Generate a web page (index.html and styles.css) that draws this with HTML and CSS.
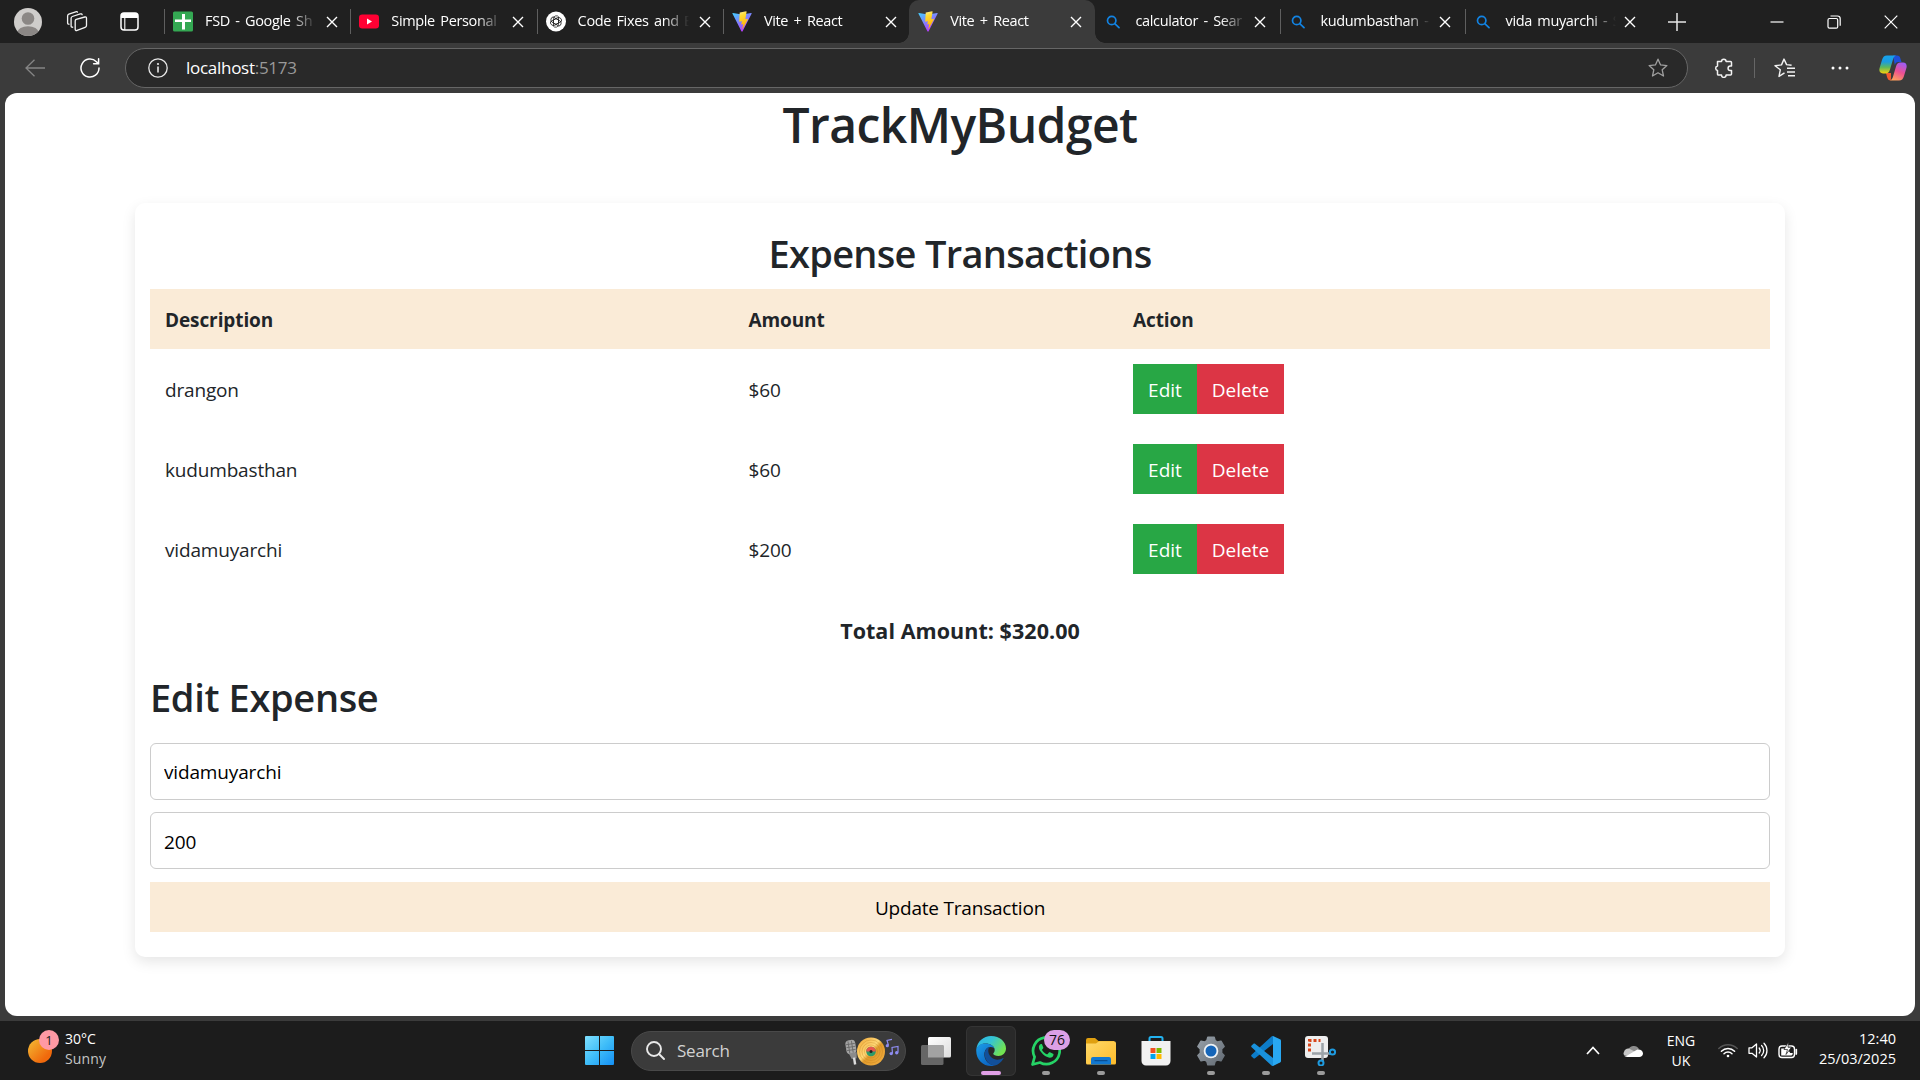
FILE: index.html
```html
<!DOCTYPE html>
<html lang="en">
<head>
<meta charset="utf-8">
<title>TrackMyBudget</title>
<link rel="stylesheet" href="styles.css">
</head>
<body>
<svg class="defs" width="0" height="0" aria-hidden="true">
  <defs>
    <linearGradient id="viteA" x1="0" y1="0" x2=".6" y2="1"><stop offset="0" stop-color="#41d1ff"/><stop offset="1" stop-color="#bd34fe"/></linearGradient>
    <linearGradient id="viteB" x1=".4" y1="0" x2=".6" y2="1"><stop offset="0" stop-color="#ffea83"/><stop offset=".2" stop-color="#ffdd35"/><stop offset="1" stop-color="#ffa800"/></linearGradient>
    <symbol id="vite" viewBox="0 0 20 21"><path d="M.4 2.6 9.4 20.3c.3.5 1 .5 1.200 0L19.700 2.600c.2-.4-.1-.8-.6-.7L10 3.500.900 1.900c-.4-.1-.7.3-.5.700z" fill="url(#viteA)"/><path d="M14.200.3 8 1.500c-.2 0-.3.1-.3.300L7.200 10.300c0 .3.2.4.4.4l1.900-.4c.2 0 .4.1.4.3l-.6 2.500c0 .2.1.4.4.4l1.100-.3c.2-.1.4.1.4.3l-.9 4c0 .3.3.4.4.2L16 8.200c.1-.2 0-.4-.3-.4l-1.900.4c-.3 0-.4-.1-.4-.4l1.200-7.100c0-.2-.1-.4-.4-.4z" fill="url(#viteB)"/></symbol>
    <symbol id="find" viewBox="0 0 14 14"><g fill="none" stroke="#1283e2" stroke-width="1.700" stroke-linecap="round"><circle cx="5.700" cy="5.500" r="4.200"/><path d="M8.800 8.600 13 12.700"/></g></symbol>
    <symbol id="x" viewBox="0 0 12 12"><path d="M1 1l10 10M11 1 1 11" stroke="#fff" stroke-width="1.400"/></symbol>
  </defs>
</svg>

<div class="screen">
  <header class="tabbar">
    <div class="tools">
      <svg class="avatar" viewBox="0 0 28 28"><defs><clipPath id="av"><circle cx="14" cy="14" r="14"/></clipPath></defs><circle cx="14" cy="14" r="14" fill="#cfcdcb"/><g clip-path="url(#av)" fill="#8b8785"><circle cx="14" cy="10.500" r="6.300"/><ellipse cx="14" cy="24.500" rx="10.500" ry="6.300"/></g></svg>
      <svg class="workspaces" viewBox="0 0 22 21" fill="none" stroke="#f2f2f2" stroke-width="1.300" stroke-linejoin="round" stroke-linecap="round"><path d="M10.200 8.400 18.800 6c1-.3 1.700.2 1.700 1.200v7.200c0 .9-.5 1.600-1.400 1.900l-8 3.100c-1.100.4-1.900 0-1.900-1.200V10c0-.8.300-1.300 1-1.600z"/><path d="M6.700 16.200c-1 .2-1.600-.3-1.600-1.200V7.200c0-.8.4-1.400 1.200-1.700l8-2.600c1-.3 1.700 0 1.800.7M3 13.200c-.8.100-1.400-.4-1.400-1.200V5c0-.9.400-1.500 1.200-1.800l6.900-2.400c.9-.3 1.500-.1 1.700.3"/></svg>
      <svg class="vtabs" viewBox="0 0 19 19"><rect x="1" y="1" width="17" height="17" rx="3" fill="none" stroke="#fff" stroke-width="1.500"/><path d="M1 4a3 3 0 0 1 3-3h11a3 3 0 0 1 3 3v2H1z" fill="#fff"/><path d="M4.800 6v12" stroke="#fff" stroke-width="1.100"/></svg>
    </div>
    <nav class="tabs">
      <div class="tab"><svg class="fav" viewBox="0 0 20 20"><rect width="20" height="20" rx="1.500" fill="#34a853"/><path d="M9 2.500h3v5.600h6v2.400h-6V18H9v-7.500H2V8.100h7z" fill="#fff"/></svg><span class="label">FSD - Google Sh</span><svg class="close"><use href="#x"/></svg></div>
      <div class="tab"><svg class="fav" viewBox="0 0 20 20"><rect y="3" width="20" height="14" rx="3.200" fill="#ff0033"/><path d="M8 7v6l5-3z" fill="#fff"/></svg><span class="label">Simple Personal</span><svg class="close"><use href="#x"/></svg></div>
      <div class="tab"><svg class="fav" viewBox="0 0 20 20"><circle cx="10" cy="10" r="10" fill="#fff"/><g fill="none" stroke="#222" stroke-width=".8"><path id="petal" d="M10 12.900 7.400 11.400V7.200a3 3 0 0 1 5.400-1.700M12.500 8.500V5.600"/><use href="#petal" transform="rotate(60 10 10)"/><use href="#petal" transform="rotate(120 10 10)"/><use href="#petal" transform="rotate(180 10 10)"/><use href="#petal" transform="rotate(240 10 10)"/><use href="#petal" transform="rotate(300 10 10)"/></g></svg><span class="label">Code Fixes and E</span><svg class="close"><use href="#x"/></svg></div>
      <div class="tab"><svg class="fav"><use href="#vite"/></svg><span class="label">Vite + React</span><svg class="close"><use href="#x"/></svg></div>
      <div class="tab active"><svg class="fav"><use href="#vite"/></svg><span class="label">Vite + React</span><svg class="close"><use href="#x"/></svg></div>
      <div class="tab slim plain"><svg class="fav small"><use href="#find"/></svg><span class="label">calculator - Sear</span><svg class="close"><use href="#x"/></svg></div>
      <div class="tab slim"><svg class="fav small"><use href="#find"/></svg><span class="label">kudumbasthan -</span><svg class="close"><use href="#x"/></svg></div>
      <div class="tab slim"><svg class="fav small"><use href="#find"/></svg><span class="label">vida muyarchi - S</span><svg class="close"><use href="#x"/></svg></div>
    </nav>
    <svg class="newtab" viewBox="0 0 18 18"><path d="M9 0v18M0 9h18" stroke="#e6e6e6" stroke-width="1.500"/></svg>
    <div class="window">
      <svg viewBox="0 0 14 14"><path d="M.5 7h13" stroke="#fff" stroke-width="1.200"/></svg>
      <svg viewBox="0 0 14 14" fill="none" stroke="#fff" stroke-width="1.200"><rect x="1" y="3.500" width="9.700" height="9.700" rx="1.500"/><path d="M3.500 1h7a2.700 2.700 0 0 1 2.700 2.700v7"/></svg>
      <svg viewBox="0 0 14 14"><path d="M.7.7l12.600 12.600M13.300.7.700 13.300" stroke="#fff" stroke-width="1.200"/></svg>
    </div>
  </header>

  <div class="toolbar">
    <svg class="back" viewBox="0 0 20 18"><path d="M9.500.8 1 9l8.500 8.200M1 9h19" fill="none" stroke="#858585" stroke-width="1.300"/></svg>
    <svg class="reload" viewBox="0 0 20 20" fill="none" stroke="#fff" stroke-width="1.500" stroke-linecap="round"><path d="M19 10a9 9 0 1 1-2.600-6.300l1.600 1.600M18.600.8v5h-5"/></svg>
    <div class="address">
      <svg class="info" viewBox="0 0 20 20"><circle cx="10" cy="10" r="9.200" fill="none" stroke="#e8e8e8" stroke-width="1.300"/><path d="M10 8.500v6" stroke="#e8e8e8" stroke-width="1.600"/><circle cx="10" cy="6" r="1.100" fill="#e8e8e8"/></svg>
      <span class="url">localhost<span class="port">:5173</span></span>
      <svg class="star" viewBox="0 0 20 20"><path d="m10 1.200 2.600 5.700 6.300.7-4.700 4.200 1.300 6.200-5.500-3.200L4.500 18l1.300-6.200L1.100 7.600l6.300-.7z" fill="none" stroke="#a0a0a0" stroke-width="1.300" stroke-linejoin="round"/></svg>
    </div>
    <svg class="puzzle" viewBox="0 0 20 20"><path d="M3.500 3.500h4a2.300 2.300 0 0 1 4.600 0h4.400c.7 0 1 .4 1 1v3.400h-1.200a2.200 2.200 0 0 0 0 4.500h1.200v3.700c0 .7-.4 1-1 1h-4.400a2.300 2.300 0 0 1-4.600 0h-3c-.7 0-1-.4-1-1v-3.700a2.300 2.300 0 0 1 0-4.500z" fill="none" stroke="#f2f2f2" stroke-width="1.500" stroke-linejoin="round"/></svg>
    <i class="rule"></i>
    <svg class="favs" viewBox="0 0 21 20" fill="none" stroke="#f2f2f2" stroke-width="1.400" stroke-linejoin="round"><path d="M10.500 14.800 5 18.400l1.300-6.600L1 7.700l6.500-.8L10 1.100l2.600 5.500 5 .7M13 10.200h8M13 14h8M14 17.800h7"/></svg>
    <svg class="dots" viewBox="0 0 18 4" fill="#fff"><circle cx="2" cy="2" r="1.500"/><circle cx="9" cy="2" r="1.500"/><circle cx="16" cy="2" r="1.500"/></svg>
    <svg class="copilot" viewBox="0 0 28 26"><defs><linearGradient id="cpA" x2="0" y2="1"><stop stop-color="#16a3ed"/><stop offset=".35" stop-color="#1b9be0"/><stop offset=".65" stop-color="#5cb85c"/><stop offset="1" stop-color="#f9d20b"/></linearGradient><linearGradient id="cpB" x1=".7" y1="0" x2=".3" y2="1"><stop stop-color="#a05cf5"/><stop offset=".5" stop-color="#ee5091"/><stop offset="1" stop-color="#ffa05c"/></linearGradient></defs><path d="M14 .5h4c2 0 2.800 1 3.300 2.800L22.500 7h-3c-2 0-3 1-3.700 3z" fill="#1f4fd8"/><path d="M7 18h5c0 3 .3 7-.5 7.500C8.600 25.500 8 22 7 18z" fill="#f4592f"/><path d="M8 .5h9c-2 .5-2.600 2.500-3.200 4.500L11 14.500c-.8 2.700-2 4-4.500 4H4C.8 18.500-.2 16 .6 13L3 5C4 1.900 5.200.5 8 .5z" fill="url(#cpA)"/><path d="M20 25.500h-9c2-.5 2.600-2.500 3.200-4.500L17 11.500c.8-2.700 2-4 4.500-4H24c3.200 0 4.200 2.500 3.400 5.500L25 21c-1 3.100-2.200 4.500-5 4.500z" fill="url(#cpB)"/></svg>
  </div>

  <main class="page">
    <h1 class="brand">TrackMyBudget</h1>
    <section class="card">
      <h2 class="title center">Expense Transactions</h2>
      <table class="table">
        <colgroup><col class="c1"><col class="c2"><col class="c3"></colgroup>
        <thead><tr><th>Description</th><th>Amount</th><th>Action</th></tr></thead>
        <tbody>
          <tr><td>drangon</td><td>$60</td><td><div class="actions"><button class="btn edit">Edit</button><button class="btn delete">Delete</button></div></td></tr>
          <tr><td>kudumbasthan</td><td>$60</td><td><div class="actions"><button class="btn edit">Edit</button><button class="btn delete">Delete</button></div></td></tr>
          <tr><td>vidamuyarchi</td><td>$200</td><td><div class="actions"><button class="btn edit">Edit</button><button class="btn delete">Delete</button></div></td></tr>
        </tbody>
      </table>
      <p class="total">Total Amount: $320.00</p>
      <h2 class="title">Edit Expense</h2>
      <form class="form">
        <input class="field" type="text" value="vidamuyarchi">
        <input class="field amount" type="text" value="200">
        <button class="update" type="button">Update Transaction</button>
      </form>
    </section>
  </main>

  <footer class="taskbar">
    <div class="weather">
      <div class="sun"><span class="count">1</span></div>
      <div class="forecast"><span>30°C</span><span class="sky">Sunny</span></div>
    </div>
    <div class="dock">
      <div class="app start"><svg width="29" height="29" viewBox="0 0 29 29"><defs><linearGradient id="win" x2="1" y2="1"><stop stop-color="#7fe0ff"/><stop offset=".5" stop-color="#3fbdf8"/><stop offset="1" stop-color="#1490f5"/></linearGradient></defs><path d="M1 0h13v14H0V1a1 1 0 0 1 1-1zM15 0h13a1 1 0 0 1 1 1v13H15zM0 15h14v14H1a1 1 0 0 1-1-1zM15 15h14v13a1 1 0 0 1-1 1H15z" fill="url(#win)"/></svg></div>
      <div class="search">
        <svg class="glass" viewBox="0 0 19 19" fill="none" stroke="#e8e8e8" stroke-width="1.900" stroke-linecap="round"><circle cx="8" cy="8" r="7"/><path d="m13 13 5 5"/></svg>
        <span class="hint">Search</span>
        <svg class="music" viewBox="0 0 54 30"><defs><linearGradient id="disc" x2="1" y2="1"><stop stop-color="#f0a432"/><stop offset=".45" stop-color="#ffd978"/><stop offset=".55" stop-color="#e09a2c"/><stop offset="1" stop-color="#f6b142"/></linearGradient></defs><g transform="rotate(-9 6 12)"><rect x="1" y="4" width="10" height="14" rx="4" fill="#a5a5a5"/><path d="M1.500 8h9M1.500 11h9M1.500 14h9M4 5v12M7.500 5v12" stroke="#666" stroke-width=".8"/><path d="M3 17h8l-1 6H5z" fill="#8b8b8b"/><path d="M7.500 22v7" stroke="#ddd" stroke-width="2.400"/></g><circle cx="26" cy="15.500" r="14" fill="url(#disc)"/><g fill="none" stroke="#b97818" stroke-opacity=".5" stroke-width=".6"><circle cx="26" cy="15.500" r="11.500"/><circle cx="26" cy="15.500" r="9"/><circle cx="26" cy="15.500" r="6.500"/></g><circle cx="26" cy="15.500" r="4.800" fill="#2f9a6a"/><path d="M21.200 15.500a4.800 4.800 0 0 1 9.600 0z" fill="#e8574d"/><circle cx="26" cy="15.500" r="1.500" fill="#222"/><g fill="none" stroke="#8e8cf0" stroke-width="1.200"><path d="M43.500 9.500 42 4.500l5-1.200M47.500 17.500l-.5-6 6-1v6"/></g><g fill="#8e8cf0"><circle cx="42.300" cy="9.700" r="1.600"/><circle cx="46.200" cy="17.600" r="1.700"/><circle cx="51.700" cy="16.800" r="1.700"/></g></svg>
      </div>
      <div class="app view"><svg width="30" height="28" viewBox="0 0 30 28"><defs><linearGradient id="tv" x2="1" y2="1"><stop stop-color="#fff"/><stop offset="1" stop-color="#ddd"/></linearGradient></defs><rect x="7" width="23" height="20.500" rx="1.500" fill="url(#tv)"/><rect y="8" width="22.500" height="20" rx="1.500" fill="#666"/><path d="M7 8h15.500v12.500H7z" fill="#a3a3a3"/></svg></div>
      <div class="app current"><svg width="30" height="30" viewBox="0 0 30 30"><defs><linearGradient id="edA" x2="1" y2=".5"><stop stop-color="#2bb5e8"/><stop offset=".5" stop-color="#35c4d4"/><stop offset="1" stop-color="#72e352"/></linearGradient><linearGradient id="edB" x2=".7" y2="1"><stop stop-color="#1b9de8"/><stop offset="1" stop-color="#0b62c0"/></linearGradient></defs><path d="M.4 13C1.200 5.500 7.500 0 15 0c9 0 15 6 15 12.500 0 4.500-3.500 7.500-7.500 7.500-3 0-5.300-1-5.300-2.200 0-.8 1.500-1.300 1.500-3.800C18.700 10 14 7.500 9.500 7.500 5 7.500 1.800 10 .4 13z" fill="url(#edA)"/><path d="M.3 13C1.500 9.500 5 7.500 9.500 7.500c4.700 0 9.200 2.700 9.200 6.500 0-1.700-1.700-3-4-3-4.200 0-6.700 4-6.300 8.500C8.800 25 13.500 29 19 29.500c-1.300.4-2.600.5-4 .5C6.500 30-.6 23 .3 13z" fill="url(#edB)"/><path d="M9 21c-1.200-4 .5-9 4.500-9.900-2 2.400-1.500 7 1.500 9.900 3.500 3.400 8.500 3.300 12 1 .5-.3.800.1.500.5C25 26.500 22 29 19 29.500 14 29.500 10.300 25.500 9 21z" fill="#12509a"/></svg></div>
      <div class="app running"><svg width="30" height="30" viewBox="0 0 30 30"><path d="M1.500 28.500 3.600 21A13.300 13.300 0 1 1 9 26.500z" fill="none" stroke="#25d366" stroke-width="2.700" stroke-linejoin="round"/><path d="M10.500 8c-.7-.1-1.500.2-2 1-1.300 2-.5 4.500 1.500 7 2.500 3.200 5.500 5.300 8.500 5.700 2 .2 3.800-1 4-3 .1-.5-.1-.7-.5-.9l-3-1.500c-.5-.2-.8-.1-1.100.3l-1.200 1.500c-.3.300-.6.300-1 .1-2-.9-3.500-2.300-4.500-4-.2-.4-.1-.6.100-.9.600-.6 1.200-1.300 1-1.900l-1.200-3c-.2-.4-.3-.4-.6-.4z" fill="#25d366"/></svg><span class="unread">76</span></div>
      <div class="app running"><svg width="30" height="28" viewBox="0 0 30 28"><defs><linearGradient id="fd" x2="1" y2="1"><stop stop-color="#ffd96a"/><stop offset="1" stop-color="#fdbb2a"/></linearGradient></defs><path d="M0 3a2 2 0 0 1 2-2h7l3.500 3H28v5H0z" fill="#e0a010"/><path d="M0 6.500h10L13 4.300h15a2 2 0 0 1 2 2V26a1.500 1.500 0 0 1-1.500 1.500h-27A1.500 1.500 0 0 1 0 26z" fill="url(#fd)"/><path d="M5 27.500V22a2 2 0 0 1 2-2h16a2 2 0 0 1 2 2v5.500z" fill="#1278d0"/><path d="M9 23.700h12" stroke="#0a4f94" stroke-width="1.200" stroke-linecap="round"/></svg></div>
      <div class="app"><svg width="30" height="30" viewBox="0 0 30 30"><path d="M8.500 6V2.500c0-1 .5-1.500 1.500-1.500h10c1 0 1.500.5 1.500 1.500V6" fill="none" stroke="#22b2f0" stroke-width="2"/><path d="M.5 5h29v20a4.500 4.500 0 0 1-4.500 4.500H5A4.500 4.500 0 0 1 .5 25z" fill="#f1f1f1"/><path d="M9.500 12H14.500v5h-5z" fill="#f25022"/><path d="M15.500 12h5v5h-5z" fill="#7fba00"/><path d="M9.500 18h5v5h-5z" fill="#00a4ef"/><path d="M15.500 18h5v5h-5z" fill="#ffb900"/></svg></div>
      <div class="app running"><svg width="30" height="30" viewBox="0 0 30 30"><defs><linearGradient id="gr" x2="1" y2="1"><stop stop-color="#97a0a8"/><stop offset="1" stop-color="#626a73"/></linearGradient></defs><path d="M11.800 1.200h6.400l1 3.500 2.300 1.300 3.500-.9 3.200 5.500L25.700 13v4l2.500 2.400-3.200 5.500-3.500-.9-2.300 1.300-1 3.500h-6.400l-1-3.500L8.500 24l-3.500.9-3.200-5.500L4.300 17v-4l-2.500-2.400L5 5.100l3.500.9 2.300-1.300z" fill="url(#gr)" stroke="url(#gr)" stroke-width="1.400" stroke-linejoin="round"/><circle cx="15" cy="15" r="7.300" fill="#eef2f5"/><circle cx="15" cy="15" r="5.500" fill="#1565b8"/></svg></div>
      <div class="app running"><svg width="30" height="30" viewBox="0 0 30 30"><path d="m22 0 7 3.300c.6.300 1 .8 1 1.500V25c0 .7-.4 1.300-1 1.600L22 30z" fill="#29a8f2"/><path d="M22 0v8L4 22.300c-.5.400-1 .4-1.500 0L.6 20.600c-.6-.5-.6-1.300 0-1.800L20.500.5C21 .1 21.500 0 22 0z" fill="#0d7cc9"/><path d="M22 30v-8L4 7.700c-.5-.4-1-.4-1.500 0L.6 9.400c-.6.500-.6 1.300 0 1.800l19.900 18.300c.5.400 1 .5 1.500.5z" fill="#1991dc"/></svg></div>
      <div class="app running"><svg width="32" height="30" viewBox="0 0 32 30"><rect x="0" y="0" width="23" height="22" rx="3" fill="#eee"/><path d="M4.500 15.500v-11h11" fill="none" stroke="#d8461a" stroke-width="3" stroke-dasharray="3 2"/><path d="M17.500 7v18M7 17.500h19" stroke="#9ca3a8" stroke-width="2.500"/><g fill="none" stroke="#1e9be0" stroke-width="2"><circle cx="27.500" cy="16" r="2.600"/><circle cx="16" cy="27" r="2.500"/></g></svg></div>
    </div>
    <div class="tray">
      <svg class="chev" viewBox="0 0 14 9"><path d="m1 8 6-6.500L13 8" fill="none" stroke="#fff" stroke-width="1.700"/></svg>
      <svg class="cloud" viewBox="0 0 20 13"><path d="M5 6.500A6 6 0 0 1 16 5l-5 4z" fill="#8d8d8d"/><path d="M1 8c.5-2.500 3-4 5.500-3.300L16 10 4 12C1 12-.3 10 1 8z" fill="#c6c6c6"/><path d="M3 12.300 13.500 6c3-1.300 6.300.5 6.500 3.200.1 2.200-1.500 3.800-3.700 3.800H4c-1.500 0-2.400-.8-3-1.500z" fill="#fff"/></svg>
      <div class="lang"><span>ENG</span><span>UK</span></div>
      <svg class="wifi" viewBox="0 0 20 15" fill="none" stroke="#fff" stroke-width="1.500" stroke-linecap="round"><path d="M.8 5.500a13 13 0 0 1 18.400 0" stroke="#555"/><path d="M3.400 8.200a9.300 9.300 0 0 1 13.200 0M6 10.700a5.700 5.700 0 0 1 8 0"/><circle cx="10" cy="13" r="1.300" fill="#fff" stroke="none"/></svg>
      <svg class="vol" viewBox="0 0 20 17" fill="none" stroke="#fff" stroke-width="1.300" stroke-linejoin="round" stroke-linecap="round"><path d="M1 5.800h3L8.500 2v13L4 11.300H1zM11.200 6a4 4 0 0 1 0 5M13.600 3.500a7 7 0 0 1 0 10M16 1.200a10.500 10.500 0 0 1 0 14.600"/></svg>
      <svg class="batt" viewBox="0 0 20 17"><rect x="1" y="4" width="15.500" height="11.500" rx="3" fill="none" stroke="#fff" stroke-width="1.400"/><path d="M18.300 7.500v4.500" stroke="#fff" stroke-width="1.700" stroke-linecap="round"/><path d="M3.200 6.500h6l3 4.500h2.500v1.200l-1.200 1.200H3.200z" fill="#fff"/><path d="M10.500 0 6 7.500h3.500L8 12.500l5.500-7.300H10z" fill="#fff" stroke="#1c1c1c" stroke-width=".7"/></svg>
      <div class="clock"><span>12:40</span><span>25/03/2025</span></div>
    </div>
  </footer>
</div>
</body>
</html>
```
FILE: styles.css
```css
* { box-sizing: border-box; }
body { margin: 0; background: #3b3b3b; font-family: "Open Sans", "Noto Sans", sans-serif; color: #212529; overflow: hidden; }
svg { display: block; flex: none; }
.defs { position: absolute; }
.screen { width: 1920px; height: 1080px; display: flex; flex-direction: column; }

.tabbar { height: 43px; flex: none; display: flex; align-items: center; background: #202020; color: #fff; }
.tools { width: 164px; flex: none; display: flex; align-items: center; padding-left: 14px; }
.avatar { width: 28px; height: 28px; }
.workspaces { width: 22px; height: 21px; margin-left: 24px; }
.vtabs { width: 19px; height: 19px; margin-left: 32px; }
.tabs { display: flex; height: 43px; }
.tab { width: 186.300px; height: 43px; display: flex; align-items: center; padding-left: 9px; background: linear-gradient(#5f5f5f, #5f5f5f) 0 9px / 1px 25px no-repeat; }
.tab.slim { width: 185px; padding-left: 11px; }
.tab.plain, .tab.active { background-image: none; }
.tab.active { background: #3b3b3b; border-radius: 10px 10px 0 0; position: relative; }
.tab.active::before, .tab.active::after { content: ""; position: absolute; bottom: 0; width: 10px; height: 10px; }
.tab.active::before { left: -10px; background: radial-gradient(circle at 0 0, transparent 9.500px, #3b3b3b 10px); }
.tab.active::after { right: -10px; background: radial-gradient(circle at 100% 0, transparent 9.500px, #3b3b3b 10px); }
.fav { width: 20px; height: 21px; }
.fav.small { width: 14px; height: 14px; margin-right: 3px; }
.label { width: 112px; margin-left: 12px; white-space: nowrap; font-size: 14.500px; letter-spacing: -.35px; word-spacing: 2px; line-height: 20px; margin-top: -1px; mask-image: linear-gradient(90deg, #000 86px, transparent 111px); }
.slim .label { width: 111px; }
.close { width: 12px; height: 12px; margin-left: 9px; }
.slim .close, .active .close { margin-left: 8px; }
.newtab { width: 18px; height: 18px; margin-left: 18px; }
.window { margin-left: auto; display: flex; gap: 43px; padding-right: 22px; }
.window svg { width: 14px; height: 14px; }

.toolbar { height: 50px; flex: none; display: flex; align-items: center; }
.back { width: 20px; height: 18px; margin-left: 25px; }
.reload { width: 20px; height: 20px; margin-left: 35px; }
.address { width: 1563px; height: 40px; margin-left: 25px; border: 1px solid #666; border-radius: 20px; background: #292929; display: flex; align-items: center; padding: 0 19px 0 22px; }
.info { width: 20px; height: 20px; }
.url { margin: -2px 0 0 18px; color: #fff; font-size: 17px; letter-spacing: -.28px; }
.port { color: #999; }
.star { width: 20px; height: 20px; margin-left: auto; }
.puzzle { width: 20px; height: 20px; margin-left: 26px; }
.rule { width: 1px; height: 20px; margin-left: 20px; background: #666; }
.favs { width: 21px; height: 20px; margin-left: 19px; }
.dots { width: 18px; height: 4px; margin-left: 36px; }
.copilot { width: 28px; height: 26px; margin-left: 30px; }

.page { height: 923px; margin: 0 5px 5px; flex: none; background: #fff; border-radius: 12px; font-size: 19px; letter-spacing: -.1px; }
.brand { margin: 0; padding-top: 2px; text-align: center; font-size: 48px; font-weight: 600; line-height: 60px; letter-spacing: -.55px; }
.card { width: 1650px; margin: 48px auto 0; padding: 26px 15px 25px; border-radius: 10px; box-shadow: 0 5px 14px rgba(0, 0, 0, .1); }
.title { margin: 0; font-size: 38px; font-weight: 600; line-height: 48px; letter-spacing: -.35px; }
.center { text-align: center; letter-spacing: -.7px; }
.table { width: 1620px; margin-top: 12px; border-collapse: collapse; table-layout: fixed; }
.c1 { width: 583.500px; }
.c2 { width: 384.500px; }
.table th, .table td { padding: 2px 15px 0; text-align: left; line-height: 30px; }
.table th { height: 60px; background: #faebd7; font-weight: 700; }
.table td { height: 80px; }
.table td:last-child { padding-top: 0; }
.table td:first-child { letter-spacing: -.17px; }
.actions { display: flex; }
.btn { height: 50px; border: 0; padding: 2px 0 0; color: #fff; font: inherit; }
.edit { width: 64px; background: #28a745; }
.delete { width: 87px; background: #dc3545; }
.total { margin: 25px 0 0; text-align: center; font-size: 21.500px; font-weight: 700; line-height: 34px; letter-spacing: .05px; }
.total + .title { margin-top: 25px; }
.form { display: flex; flex-direction: column; margin-top: 22px; }
.field { height: 57px; margin-bottom: 12px; padding: 0 12px 0 13px; border: 1px solid #ccc; border-radius: 6px; font: inherit; letter-spacing: -.15px; color: #000; outline: none; }
.amount { padding-top: 2px; }
.update { height: 50px; margin-top: 1px; padding: 2px 0 0; border: 0; background: #faebd7; font: inherit; letter-spacing: -.2px; color: #000; }

.taskbar { height: 59px; flex: none; display: flex; align-items: center; background: #1c1c1c; color: #fff; font-size: 14px; line-height: 20px; }
.weather { display: flex; width: 572px; padding-left: 28px; align-items: center; }
.sun { position: relative; width: 24px; height: 24px; border-radius: 50%; background: linear-gradient(135deg, #f3bd35, #f0690c 75%); }
.count { position: absolute; left: 11px; top: -9px; width: 20px; height: 20px; border-radius: 50%; background: #ff99a4; color: #222; text-align: center; font-size: 13px; }
.forecast { display: flex; flex-direction: column; margin: -3px 0 0 13px; }
.sky { color: #c5c5c5; letter-spacing: .15px; }
.dock { display: flex; align-items: center; }
.app { position: relative; width: 50px; height: 50px; margin-right: 5px; display: flex; align-items: center; justify-content: center; border-radius: 6px; }
.start { width: 55px; margin-right: 4px; }
.current { background: #292929; box-shadow: inset 0 0 0 1px #343434; }
.current::after, .running::after { content: ""; position: absolute; bottom: 1px; left: 21px; width: 8px; height: 4px; border-radius: 2px; background: #9b9b9b; }
.current::after { left: 15px; width: 20px; background: #e09fe6; }
.search { width: 275px; height: 40px; margin-right: 5px; border-radius: 20px; background: #3b3b3b; border: 1px solid #494949; display: flex; align-items: center; padding: 0 6px 0 14px; }
.glass { width: 19px; height: 19px; }
.hint { margin-left: 12px; color: #d2d2d2; font-size: 17px; letter-spacing: -.2px; }
.music { width: 54px; height: 30px; margin-left: auto; }
.unread { position: absolute; left: 23px; top: 4px; width: 26px; height: 20px; border-radius: 10px; background: #dca0e6; color: #111; text-align: center; font-size: 14px; }
.tray { display: flex; align-items: center; margin-left: auto; padding-right: 24px; }
.chev { width: 14px; height: 9px; }
.cloud { width: 20px; height: 13px; margin-left: 23px; }
.lang { width: 40px; margin-left: 18px; display: flex; flex-direction: column; align-items: center; }
.wifi { width: 20px; height: 15px; margin-left: 17px; }
.vol { width: 20px; height: 17px; margin-left: 10px; }
.batt { width: 20px; height: 17px; margin-left: 10px; }
.clock { width: 98px; margin-top: -3px; display: flex; flex-direction: column; align-items: flex-end; font-size: 14.500px; }
```
